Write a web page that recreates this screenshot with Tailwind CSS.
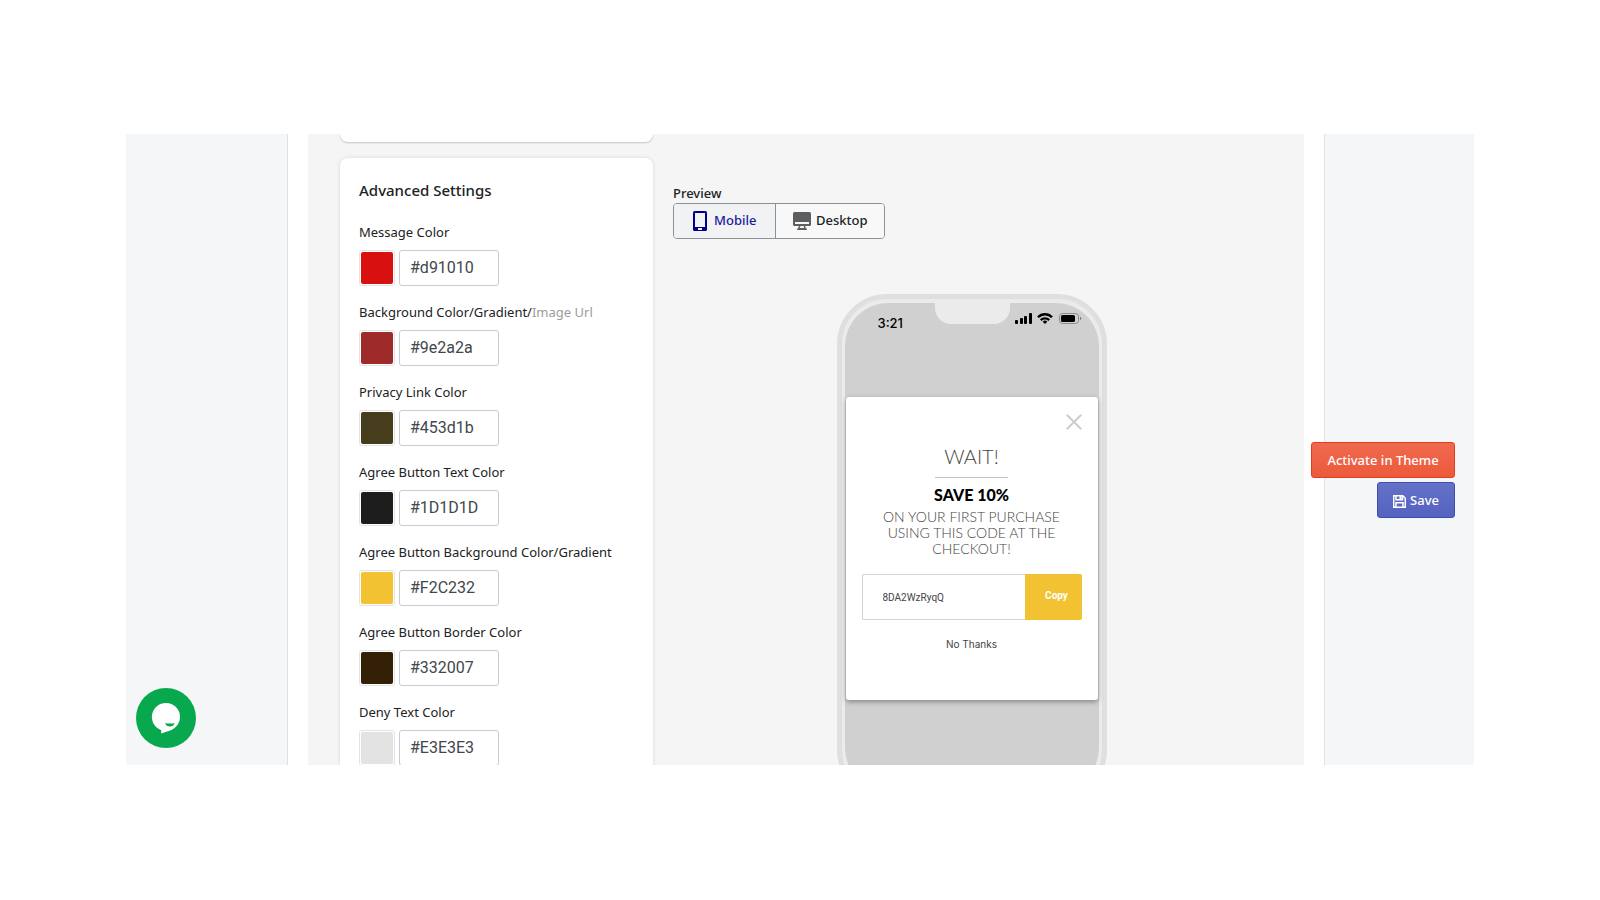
<!DOCTYPE html>
<html lang="en">
<head>
  <meta charset="UTF-8">
  <meta name="viewport" content="width=device-width, initial-scale=1.0">
  <title>Popup Settings</title>
  <script src="https://cdn.jsdelivr.net/npm/@tailwindcss/browser@4"></script>
</head>
<body class="bg-white font-['Noto_Sans',sans-serif] text-[#202223]">
  <div class="h-screen px-[126px] pt-[134px] pb-[135px]">
    <div class="relative flex h-full overflow-hidden">
      <aside class="w-[162px] shrink-0 border-r border-[#dfe1e3] bg-[#f4f6f8]"></aside>

      <main class="min-w-0 flex-1 px-5">
        <div class="flex h-full gap-5 overflow-hidden bg-[#f5f5f5] pr-[34px] pl-8">

          <!-- Settings column -->
          <div class="flex w-[313px] shrink-0 flex-col gap-4">
            <div class="h-2 shrink-0 rounded-b-lg bg-white shadow-[0_1px_2px_rgba(0,0,0,0.2)]"></div>
            <form class="shrink-0 rounded-lg bg-white px-[19px] py-5 shadow-[0_0_4px_rgba(0,0,0,0.12)]">
              <h2 class="mb-[18px] text-[15px] leading-6 font-medium">Advanced Settings</h2>

              <div class="flex flex-col gap-[14px] text-[13px] leading-6">
                <div>
                  <label for="message-color">Message Color</label>
                  <div class="mt-[6px] flex h-9 gap-1">
                    <input type="color" value="#d91010" aria-label="Message color swatch" class="size-9 appearance-none rounded-[3px] border border-[#e1e3e5] bg-white p-px [&::-webkit-color-swatch-wrapper]:p-0 [&::-webkit-color-swatch]:rounded-[2px] [&::-webkit-color-swatch]:border-0">
                    <input id="message-color" type="text" value="#d91010" class="h-9 w-[100px] rounded-[3px] border border-[#c4cdd5] bg-white px-[10px] pb-[2px] font-['Roboto',sans-serif] text-base text-[#42474c]">
                  </div>
                </div>
                <div>
                  <label for="background-color">Background Color/Gradient/<span class="text-[#9c9c9c]">Image Url</span></label>
                  <div class="mt-[6px] flex h-9 gap-1">
                    <input type="color" value="#9e2a2a" aria-label="Background color swatch" class="size-9 appearance-none rounded-[3px] border border-[#e1e3e5] bg-white p-px [&::-webkit-color-swatch-wrapper]:p-0 [&::-webkit-color-swatch]:rounded-[2px] [&::-webkit-color-swatch]:border-0">
                    <input id="background-color" type="text" value="#9e2a2a" class="h-9 w-[100px] rounded-[3px] border border-[#c4cdd5] bg-white px-[10px] pb-[2px] font-['Roboto',sans-serif] text-base text-[#42474c]">
                  </div>
                </div>
                <div>
                  <label for="privacy-color">Privacy Link Color</label>
                  <div class="mt-[6px] flex h-9 gap-1">
                    <input type="color" value="#453d1b" aria-label="Privacy link color swatch" class="size-9 appearance-none rounded-[3px] border border-[#e1e3e5] bg-white p-px [&::-webkit-color-swatch-wrapper]:p-0 [&::-webkit-color-swatch]:rounded-[2px] [&::-webkit-color-swatch]:border-0">
                    <input id="privacy-color" type="text" value="#453d1b" class="h-9 w-[100px] rounded-[3px] border border-[#c4cdd5] bg-white px-[10px] pb-[2px] font-['Roboto',sans-serif] text-base text-[#42474c]">
                  </div>
                </div>
                <div>
                  <label for="agree-text-color">Agree Button Text Color</label>
                  <div class="mt-[6px] flex h-9 gap-1">
                    <input type="color" value="#1d1d1d" aria-label="Agree button text color swatch" class="size-9 appearance-none rounded-[3px] border border-[#e1e3e5] bg-white p-px [&::-webkit-color-swatch-wrapper]:p-0 [&::-webkit-color-swatch]:rounded-[2px] [&::-webkit-color-swatch]:border-0">
                    <input id="agree-text-color" type="text" value="#1D1D1D" class="h-9 w-[100px] rounded-[3px] border border-[#c4cdd5] bg-white px-[10px] pb-[2px] font-['Roboto',sans-serif] text-base text-[#42474c]">
                  </div>
                </div>
                <div>
                  <label for="agree-bg-color">Agree Button Background Color/Gradient</label>
                  <div class="mt-[6px] flex h-9 gap-1">
                    <input type="color" value="#f2c232" aria-label="Agree button background swatch" class="size-9 appearance-none rounded-[3px] border border-[#e1e3e5] bg-white p-px [&::-webkit-color-swatch-wrapper]:p-0 [&::-webkit-color-swatch]:rounded-[2px] [&::-webkit-color-swatch]:border-0">
                    <input id="agree-bg-color" type="text" value="#F2C232" class="h-9 w-[100px] rounded-[3px] border border-[#c4cdd5] bg-white px-[10px] pb-[2px] font-['Roboto',sans-serif] text-base text-[#42474c]">
                  </div>
                </div>
                <div>
                  <label for="agree-border-color">Agree Button Border Color</label>
                  <div class="mt-[6px] flex h-9 gap-1">
                    <input type="color" value="#332007" aria-label="Agree button border swatch" class="size-9 appearance-none rounded-[3px] border border-[#e1e3e5] bg-white p-px [&::-webkit-color-swatch-wrapper]:p-0 [&::-webkit-color-swatch]:rounded-[2px] [&::-webkit-color-swatch]:border-0">
                    <input id="agree-border-color" type="text" value="#332007" class="h-9 w-[100px] rounded-[3px] border border-[#c4cdd5] bg-white px-[10px] pb-[2px] font-['Roboto',sans-serif] text-base text-[#42474c]">
                  </div>
                </div>
                <div>
                  <label for="deny-color">Deny Text Color</label>
                  <div class="mt-[6px] flex h-9 gap-1">
                    <input type="color" value="#e3e3e3" aria-label="Deny text color swatch" class="size-9 appearance-none rounded-[3px] border border-[#e1e3e5] bg-white p-px [&::-webkit-color-swatch-wrapper]:p-0 [&::-webkit-color-swatch]:rounded-[2px] [&::-webkit-color-swatch]:border-0">
                    <input id="deny-color" type="text" value="#E3E3E3" class="h-9 w-[100px] rounded-[3px] border border-[#c4cdd5] bg-white px-[10px] pb-[2px] font-['Roboto',sans-serif] text-base text-[#42474c]">
                  </div>
                </div>
              </div>
            </form>
          </div>

          <!-- Preview column -->
          <div class="min-w-0 flex-1 pt-[49px]">
            <p class="text-[13px] leading-5 font-medium">Preview</p>
            <div class="flex h-9 w-fit rounded-[4px] border border-[#8c9196] text-[13px] font-medium">
              <button type="button" class="flex w-[102px] items-center gap-[7px] rounded-l-[3px] border-r border-[#8c9196] bg-[#f1f2f4] pl-[19px] text-[#1c1c9c]">
                <svg class="h-5 w-[14px] shrink-0" viewBox="0 0 14 20" fill="#00008b"><path fill-rule="evenodd" d="M1.500 0h11A1.500 1.500 0 0 1 14 1.500v17a1.500 1.500 0 0 1-1.500 1.500h-11A1.500 1.500 0 0 1 0 18.500v-17A1.500 1.500 0 0 1 1.500 0zM2 2v14h10V2zM5 17v2h4v-2z"/></svg>
                Mobile
              </button>
              <button type="button" class="flex w-[108px] items-center gap-[5px] rounded-r-[3px] bg-[#f8f8f8] pl-[17px]">
                <svg class="h-[18px] w-[18px] shrink-0" viewBox="0 0 18 18" fill="#5c5f62"><path fill-rule="evenodd" d="M1.500 0h15A1.500 1.500 0 0 1 18 1.500v11a1.500 1.500 0 0 1-1.500 1.500H12l1 2.300c.6.200 1 .7 1 1.200 0 .3-.2.500-.5.500h-9c-.3 0-.5-.2-.5-.5 0-.5.400-1 1-1.200L6 14H1.500A1.500 1.500 0 0 1 0 12.500v-11A1.500 1.500 0 0 1 1.500 0zM2 10v2h14v-2zM7.500 14l-.8 2h4.600l-.8-2z"/></svg>
                Desktop
              </button>
            </div>

            <!-- Phone -->
            <div class="mx-auto mt-[55px] h-[506px] w-[270px] rounded-[50px] border-[5px] border-[#dfdfdf] bg-[#ebebeb] px-[3px] py-1">
              <div class="h-full rounded-[43px] bg-[#d0d0d0]">
                <div class="flex h-[94px] items-start">
                  <span class="w-[90px] pt-[10px] pl-[33px] font-['Inter',sans-serif] text-[13px] leading-5 font-medium text-black">3:21</span>
                  <span class="h-[21px] w-[75px] rounded-b-[16px] bg-[#ebebeb]"></span>
                  <svg class="mt-[9px] ml-[4px] h-[13px] w-[68px]" viewBox="0 0 68 13">
                    <rect x="1" y="8" width="3" height="4" rx="1"/>
                    <rect x="6" y="6" width="3" height="6" rx="1"/>
                    <rect x="10" y="4" width="3" height="8" rx="1"/>
                    <rect x="15" y="1" width="3" height="11" rx="1"/>
                    <g fill="none" stroke="#000" stroke-width="2.400">
                      <path d="M24 5.300a9.500 9.500 0 0 1 14 0"/>
                      <path d="M26.800 8.200a5.800 5.800 0 0 1 8.400 0"/>
                    </g>
                    <path d="M31 12 28.700 9.700a3.300 3.300 0 0 1 4.600 0z"/>
                    <rect x="45.500" y="1.500" width="19" height="10" rx="3" fill="none" stroke="#8b8b8b"/>
                    <rect x="47" y="3" width="14" height="7" rx="1.500"/>
                    <path d="M66 4.800v3.400q1.200-.5 1.200-1.700T66 4.800z" fill="#777"/>
                  </svg>
                </div>

                <!-- Popup -->
                <div class="mx-px h-[303px] rounded-[3px] bg-white px-[16px] pt-[17px] text-center font-['Lato',sans-serif] text-[#444] shadow-[0_2px_5px_rgba(0,0,0,0.35)]">
                  <button type="button" aria-label="Close" class="ml-auto block size-4">
                    <svg class="size-4" viewBox="0 0 16 16" stroke="#ccc" stroke-width="2"><path d="M.7.7l14.600 14.600M15.300.7.7 15.300"/></svg>
                  </button>
                  <h3 class="mx-auto mt-[11px] w-[73px] border-b border-[#c4c4c4] pb-[6px] text-xl leading-[30px] font-light">WAIT!</h3>
                  <p class="mt-2 text-base leading-[18px] font-black text-black">SAVE 10%</p>
                  <p class="mx-auto mt-[5px] w-[190px] text-sm leading-4 font-light">ON YOUR FIRST PURCHASE USING THIS CODE AT THE CHECKOUT!</p>
                  <div class="mt-[17px] flex h-[46px] font-['Roboto',sans-serif] text-[10px]">
                    <input type="text" value="8DA2WzRyqQ" aria-label="Discount code" readonly class="min-w-0 flex-1 rounded-l-[2px] border border-r-0 border-[#d3d3d3] px-5 text-[#444]">
                    <button type="button" class="w-[57px] rounded-r-[2px] bg-[#f2c232] pb-[4px] pl-[7px] font-bold text-white">Copy</button>
                  </div>
                  <button type="button" class="mt-4 font-['Inter',sans-serif] text-[10px] leading-4">No Thanks</button>
                </div>
              </div>
            </div>
          </div>
        </div>
      </main>

      <aside class="w-[150px] shrink-0 border-l border-[#dfe1e3] bg-[#f4f6f8]"></aside>

      <!-- Floating actions -->
      <div class="absolute top-[308px] right-[19px] flex flex-col items-end gap-1 text-[13px] font-medium text-white">
        <button type="button" class="h-9 w-36 rounded-[3px] border border-[#e33d1c] bg-linear-to-b from-[#f0694e] to-[#ec5a3c] pt-[2px]">Activate in Theme</button>
        <button type="button" class="flex h-9 w-[78px] items-center justify-center gap-1 rounded-[3px] border border-[#3f4eae] bg-linear-to-b from-[#6371c7] to-[#5563c1] pt-[2px]">
          <svg class="size-[13px]" viewBox="0 0 13 13" fill="none" stroke="#fff" stroke-width="1.500"><path d="M.7.7h9l2.600 2.600v9H.7z"/><path d="M3 .7v4h6.500v-4M3 12V7.700h7V12"/><path d="M6.500 1h2v3h-2z" fill="#fff" stroke="none"/></svg>
          Save
        </button>
      </div>

      <button type="button" aria-label="Open chat" class="absolute bottom-[17px] left-[10px] size-[60px] rounded-full bg-[#07a84e]">
        <svg class="size-[60px]" viewBox="0 0 60 60"><path fill="#fff" d="M30 15a14 14 0 0 1 14 14c0 7-5 12-10.500 13.800L25.200 45.500V42.200A14 14 0 0 1 30 15z"/><path fill="#07a84e" d="M29 35.300q5 .6 9.500 0-1 3.200-4.500 3.200T29 35.300z"/></svg>
      </button>
    </div>
  </div>
</body>
</html>
